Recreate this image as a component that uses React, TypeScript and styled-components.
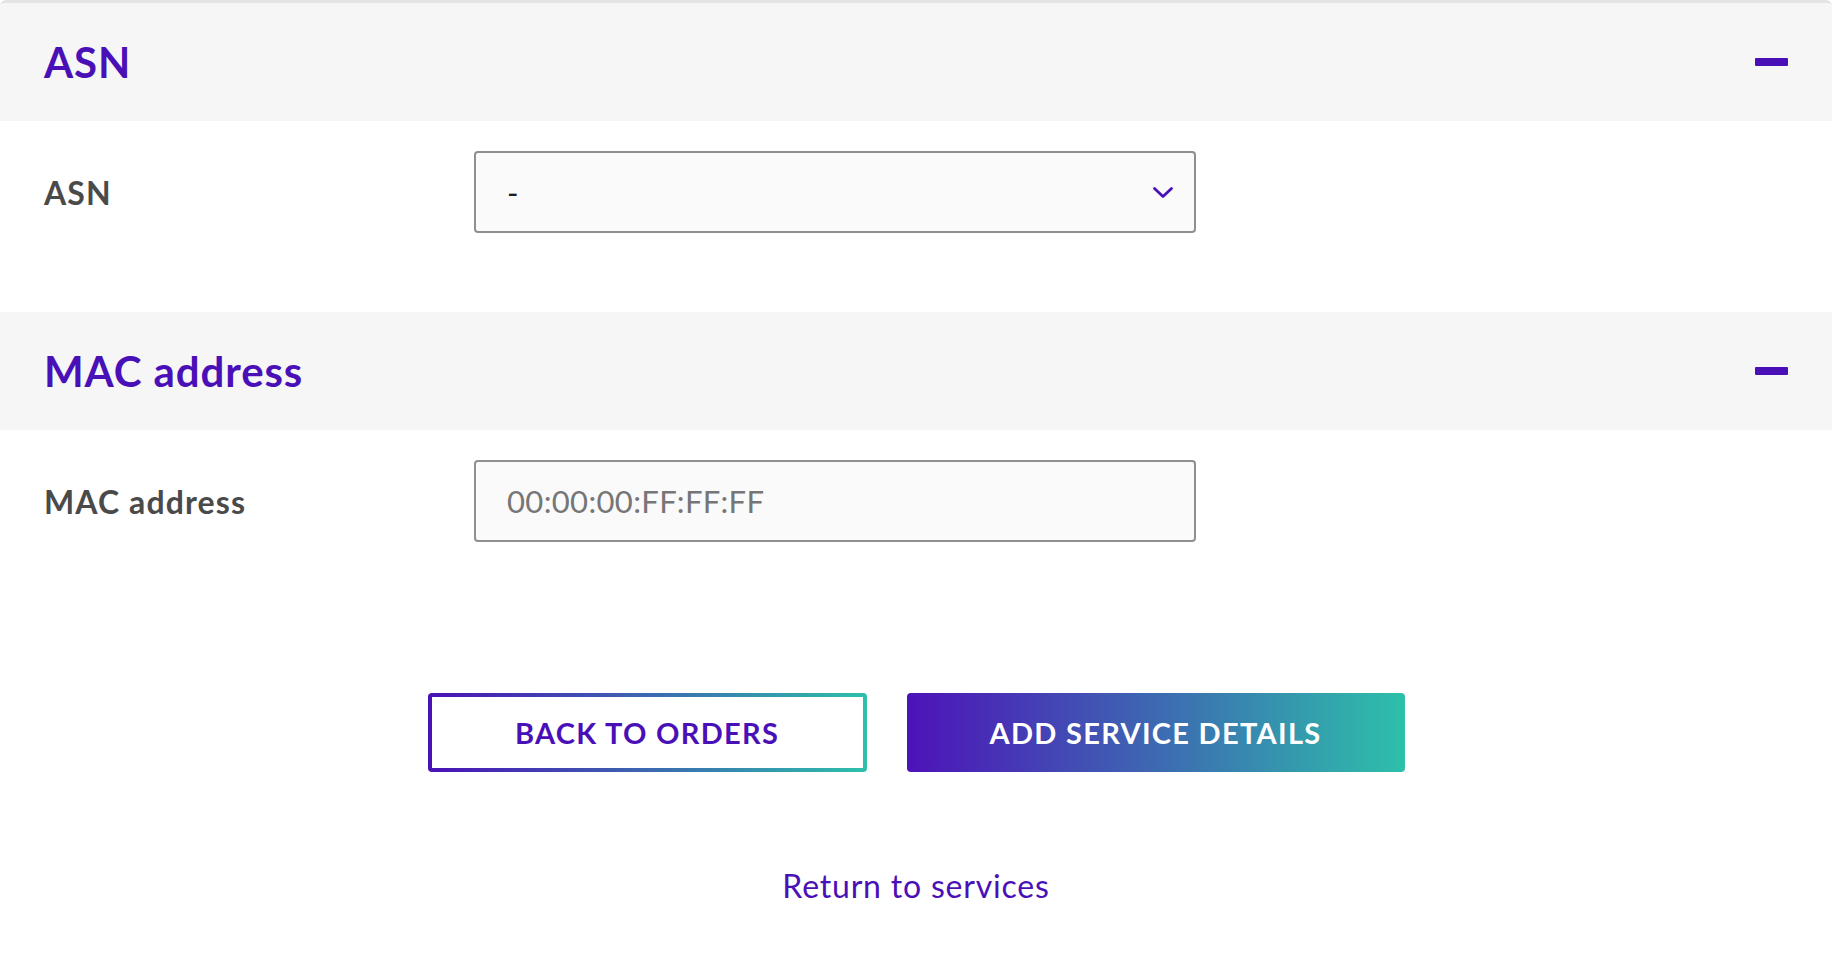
import React from 'react';
import styled, { createGlobalStyle } from 'styled-components';

const PURPLE = '#4a10b7';
const TEAL = '#2dc0aa';

const GlobalStyle = createGlobalStyle`
    body {
        margin: 0;
        background: #ffffff;
        font-family: Lato, 'Liberation Sans', sans-serif;
    }
    * {
        box-sizing: border-box;
    }
`;

interface SectionProps {
    title: string;
    children: React.ReactNode;
}

function Section({ title, children }: SectionProps) {
    return (
        <section>
            <SectionHeader>
                <SectionTitle>{title}</SectionTitle>
                <CollapseButton aria-label={`Collapse ${title}`}>
                    <Minus />
                </CollapseButton>
            </SectionHeader>
            <SectionBody>{children}</SectionBody>
        </section>
    );
}

export default function App() {
    return (
        <>
            <GlobalStyle />
            <Card>
                <Section title="ASN">
                    <FieldRow>
                        <FieldLabel htmlFor="asn">ASN</FieldLabel>
                        <SelectBox>
                            <Select id="asn" defaultValue="-">
                                <option value="-">-</option>
                            </Select>
                            <svg width="22" height="13" viewBox="0 0 22 13" fill="none">
                                <path d="M2.5 2.5l8.5 8 8.5-8" stroke={PURPLE} strokeWidth="2.8" strokeLinecap="round" strokeLinejoin="round" />
                            </svg>
                        </SelectBox>
                    </FieldRow>
                </Section>
                <Section title="MAC address">
                    <FieldRow>
                        <FieldLabel htmlFor="mac">MAC address</FieldLabel>
                        <TextInput id="mac" placeholder="00:00:00:FF:FF:FF" />
                    </FieldRow>
                </Section>
            </Card>
            <Actions>
                <OutlineButton>Back to orders</OutlineButton>
                <FilledButton>Add service details</FilledButton>
            </Actions>
            <Footer>
                <ReturnLink href="#">Return to services</ReturnLink>
            </Footer>
        </>
    );
}

const Card = styled.div`
    border-top: 3px solid #e4e4e4;
    border-radius: 6px 6px 0 0;
    overflow: hidden;
`;

const SectionHeader = styled.div`
    display: flex;
    align-items: center;
    justify-content: space-between;
    height: 118px;
    padding: 0 44px;
    background: #f6f6f6;
`;

const SectionTitle = styled.h2`
    margin: 0;
    font-size: 42px;
    font-weight: 700;
    letter-spacing: 0.9px;
    color: ${PURPLE};
`;

const CollapseButton = styled.button`
    display: flex;
    align-items: center;
    padding: 0;
    border: none;
    background: none;
    cursor: pointer;
`;

const Minus = styled.span`
    display: block;
    width: 33px;
    height: 8px;
    border-radius: 1px;
    background: ${PURPLE};
`;

const SectionBody = styled.div`
    padding: 30px 44px 79px;
`;

const FieldRow = styled.div`
    display: grid;
    grid-template-columns: 430px 722px;
    align-items: center;
`;

const FieldLabel = styled.label`
    font-size: 32px;
    font-weight: 700;
    letter-spacing: 1.1px;
    color: #4a4a4a;
`;

const SelectBox = styled.div`
    display: flex;
    align-items: center;
    height: 82px;
    padding: 0 20px 0 31px;
    border: 2px solid #8f8f8f;
    border-radius: 4px;
    background: #fafafa;
`;

const Select = styled.select`
    flex: 1;
    appearance: none;
    border: none;
    outline: none;
    background: transparent;
    font-family: inherit;
    font-size: 31px;
    color: #1e1e1e;
`;

const TextInput = styled.input`
    height: 82px;
    padding: 0 31px;
    border: 2px solid #8f8f8f;
    border-radius: 4px;
    background: #fafafa;
    font-family: inherit;
    font-size: 31px;
    letter-spacing: 0.35px;
    color: #1e1e1e;
    outline: none;

    &::placeholder {
        color: #767676;
    }
`;

const Actions = styled.div`
    display: flex;
    justify-content: center;
    gap: 40px;
    margin-top: 72px;
`;

const BaseButton = styled.button`
    height: 79px;
    border-radius: 4px;
    font-family: inherit;
    font-size: 29px;
    font-weight: 700;
    letter-spacing: 1.3px;
    text-transform: uppercase;
    cursor: pointer;
`;

const OutlineButton = styled(BaseButton)`
    width: 439px;
    border: 4px solid transparent;
    background: linear-gradient(#ffffff, #ffffff) padding-box,
        linear-gradient(90deg, ${PURPLE}, ${TEAL}) border-box;
    color: ${PURPLE};
`;

const FilledButton = styled(BaseButton)`
    width: 498px;
    border: none;
    background: linear-gradient(90deg, #4d12b9, ${TEAL});
    color: #ffffff;
`;

const Footer = styled.div`
    display: flex;
    justify-content: center;
    margin-top: 94px;
`;

const ReturnLink = styled.a`
    font-size: 32px;
    color: ${PURPLE};
    text-decoration: none;
    letter-spacing: 0.8px;
`;
